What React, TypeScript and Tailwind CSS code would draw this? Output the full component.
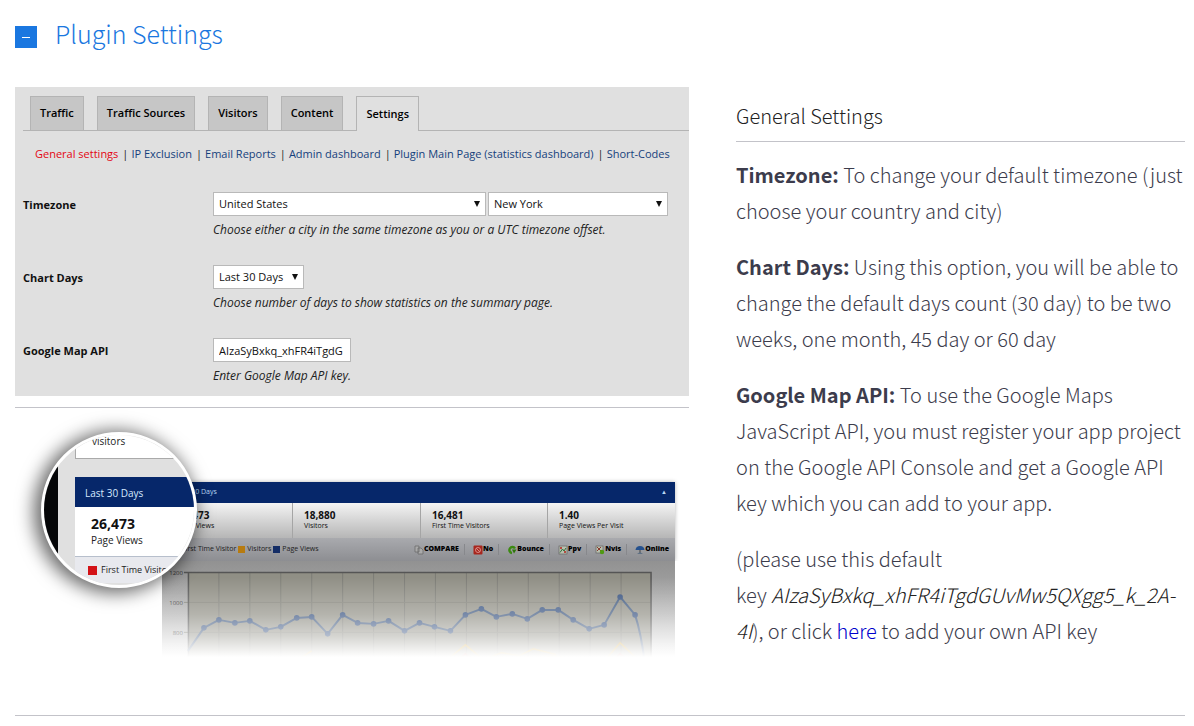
import type { ReactNode } from "react";

const tabs = ["Traffic", "Traffic Sources", "Visitors", "Content", "Settings"];
const links = [
  "General settings",
  "IP Exclusion",
  "Email Reports",
  "Admin dashboard",
  "Plugin Main Page (statistics dashboard)",
  "Short-Codes",
];
const stats = [
  ["26,473", "Page Views"],
  ["18,880", "Visitors"],
  ["16,481", "First Time Visitors"],
  ["1.40", "Page Views Per Visit"],
];

const points = [
  [26, 90], [42, 67], [57, 59], [73, 62], [88, 60], [104, 69], [119, 66], [135, 57], [150, 56],
  [166, 73], [181, 54], [196, 62], [212, 63], [227, 60], [243, 70], [258, 62], [273, 66], [289, 70],
  [304, 54], [320, 48], [335, 56], [351, 53], [366, 58], [381, 49], [397, 49], [412, 59], [428, 68],
  [443, 64], [459, 36], [474, 54],
];

function SelectBox({ id, value, className }: { id: string; value: string; className: string }) {
  return (
    <span className={`relative flex h-6 border border-[#b9b9b9] bg-white ${className}`}>
      <select
        id={id}
        aria-label={id}
        defaultValue={value}
        className="w-full appearance-none bg-transparent pl-[5px] pr-4 text-[11px] text-[#111]"
      >
        <option>{value}</option>
      </select>
      <svg viewBox="0 0 6 6" className="pointer-events-none absolute top-2 right-[5px] size-[6px]">
        <path d="M0 0H6L3 6Z" fill="#111" />
      </svg>
    </span>
  );
}

function Field({ id, label, help, children }: { id: string; label: string; help: string; children: ReactNode }) {
  return (
    <div className="flex h-[73px]">
      <label htmlFor={id} className="w-[190px] pt-[5px] text-[11px] leading-4 font-bold text-[#111]">
        {label}
      </label>
      <div className="flex-1">
        <div className="flex gap-[2px]">{children}</div>
        <p className="mt-[6px] text-[12px] leading-4 whitespace-nowrap text-[#222] italic">{help}</p>
      </div>
    </div>
  );
}

function SettingsPanel() {
  return (
    <section className="h-[309px] bg-[#e0e0e0] pt-[9px] font-['Open_Sans','Noto_Sans',sans-serif] font-normal">
      <div className="ml-2 flex items-end gap-[13px] border-b border-[#b4b4b4] pl-[7px]">
        {tabs.map((tab) => (
          <button
            key={tab}
            className={
              tab === "Settings"
                ? "-mb-px h-[35px] border border-b-0 border-[#b4b4b4] bg-[#e0e0e0] px-[9px] text-[11px] font-semibold text-black"
                : "h-[34px] border border-b-0 border-[#b4b4b4] bg-[#c6c6c6] px-[9px] text-[11px] font-semibold text-black"
            }
          >
            {tab}
          </button>
        ))}
      </div>
      <nav className="mt-[15px] ml-5 flex text-[11px] leading-4 whitespace-nowrap text-[#153f7c]">
        {links.map((link, i) => (
          <span key={link}>
            {i > 0 && <span className="mr-[3px] ml-1 text-[#222]">|</span>}
            <a href="#" className={i === 0 ? "text-[#e30613]" : ""}>
              {link}
            </a>
          </span>
        ))}
      </nav>
      <form className="mt-[30px] ml-2">
        <Field id="Timezone" label="Timezone" help="Choose either a city in the same timezone as you or a UTC timezone offset.">
          <SelectBox id="Timezone" value="United States" className="w-[273px]" />
          <SelectBox id="City" value="New York" className="w-[180px]" />
        </Field>
        <Field id="Chart Days" label="Chart Days" help="Choose number of days to show statistics on the summary page.">
          <SelectBox id="Chart Days" value="Last 30 Days" className="w-[91px]" />
        </Field>
        <Field id="api" label="Google Map API" help="Enter Google Map API key.">
          <input
            id="api"
            defaultValue="AIzaSyBxkq_xhFR4iTgdG"
            className="h-6 w-[138px] border border-[#b9b9b9] bg-white px-[5px] text-[11px] text-[#111]"
          />
        </Field>
      </form>
    </section>
  );
}

function Tool({ label, children }: { label: string; children: ReactNode }) {
  return (
    <button className="flex items-center border-l border-[#87888c] pl-2 text-[7px] font-extrabold text-black first:border-l-0">
      <svg viewBox="0 0 10 10" className="size-[10px]">
        {children}
      </svg>
      {label}
    </button>
  );
}

function Chart() {
  const line = points.map(([x, y]) => `${x} ${y}`).join("L");
  return (
    <svg viewBox="0 0 514 104" className="block w-full overflow-visible">
      <defs>
        <linearGradient id="back" x1="0" y1="0" x2="0" y2="1">
          <stop offset="0" stopColor="#929292" />
          <stop offset="0.3" stopColor="#a2a2a2" />
          <stop offset="1" stopColor="#dddddd" />
        </linearGradient>
        <linearGradient id="fade" x1="0" y1="0" x2="0" y2="1">
          <stop offset="0.15" stopColor="#fff" stopOpacity="0" />
          <stop offset="0.5" stopColor="#fff" stopOpacity="0.33" />
          <stop offset="0.7" stopColor="#fff" stopOpacity="0.62" />
          <stop offset="0.9" stopColor="#fff" stopOpacity="1" />
        </linearGradient>
      </defs>
      <rect width="514" height="104" fill="url(#back)" />
      <rect x="26" y="11" width="464" height="93" fill="#908f85" />
      <g stroke="#7b7b75" fill="none">
        {Array.from({ length: 14 }, (_, i) => (
          <path key={i} d={`M${57 + i * 31} 11V104`} />
        ))}
        <path d="M22 41.500H490M22 71.500H490" stroke="#828278" />
        <path d="M22 11.500H490V104M26.500 11V104" stroke="#555" strokeWidth="1.500" />
      </g>
      <g fontSize="6" fill="#333" textAnchor="end">
        <text x="21" y="14">1200</text>
        <text x="21" y="44">1000</text>
        <text x="21" y="74">800</text>
      </g>
      <path
        d="M370 104L390 95L405 97L420 104M280 104L304 84L322 99L340 92L358 95L372 88L395 94M440 104L459 82L478 100M128 104L150 90"
        fill="none"
        stroke="#c89a2d"
        strokeWidth="1.500"
      />
      <path d="M292 104L304 93L316 104M448 104L459 93L470 104M356 104L366 96L380 104" fill="none" stroke="#b8473e" strokeWidth="1.500" />
      <path d={`M${line}Q480 72 484 104`} fill="none" stroke="#40597f" strokeWidth="2" strokeLinejoin="round" />
      {points.slice(1).map(([x, y]) => (
        <circle key={x} cx={x} cy={y} r="2.800" fill="#35507e" />
      ))}
      <rect x="-1" width="516" height="107" fill="url(#fade)" />
    </svg>
  );
}

function Lens() {
  return (
    <div className="absolute top-6 left-[26px] size-[156px] overflow-hidden rounded-full border-[3px] border-white bg-[#e0e0e0] shadow-[-4px_2px_18px_3px_rgba(0,0,0,0.6)]">
      <div className="flex h-full">
        <div className="w-[14px] bg-[#050608]" />
        <div className="ml-[17px] flex-1 whitespace-nowrap">
          <p className="h-[24px] border-b border-l border-[#aaa] bg-white pl-4 text-[10px] leading-3 text-[#222]">visitors</p>
          <p className="mt-[18px] h-[30px] bg-[#06276a] pl-[10px] text-[10px] leading-8 text-[#d5e9ff]">Last 30 Days</p>
          <div className="h-[50px] border-b border-[#b7bfcc] bg-white pt-2 pl-4">
            <p className="text-[14px] leading-[18px] font-bold text-[#111]">26,473</p>
            <p className="text-[10px] leading-[14px] text-[#222]">Page Views</p>
          </div>
          <p className="flex h-[26px] items-center gap-1 bg-[#e8e9ee] pl-[13px] text-[9px] text-[#222]">
            <span className="size-[9px] bg-[#d31217]" />
            First Time Visitor
          </p>
        </div>
      </div>
    </div>
  );
}

function Dashboard() {
  return (
    <section className="relative pt-[74px] pr-[14px] pl-[147px] font-['Open_Sans','Noto_Sans',sans-serif] font-normal">
      <div className="shadow-[0_0_4px_rgba(0,0,0,0.3)] [clip-path:inset(-6px_-6px_0_-6px)]">
        <div className="flex h-[21px] items-center justify-between bg-[#06276a] pr-2 pl-[14px] text-[7px] text-[#b9d8f5]">
          <span>Last 30 Days</span>
          <span className="text-[6px]">▲</span>
        </div>
        <dl className="grid h-[35px] grid-cols-[130px_128px_127px_1fr] bg-linear-to-b from-[#f4f4f4] to-[#b6b6b6]">
          {stats.map(([n, label]) => (
            <div
              key={label}
              className="flex flex-col-reverse justify-end border-l border-[#a5a5a5] pt-[6px] pl-[11px] whitespace-nowrap first:border-l-0 first:pl-4"
            >
              <dt className="text-[7px] leading-[10px] text-[#111]">{label}</dt>
              <dd className="text-[10px] leading-3 font-bold text-[#111]">{n}</dd>
            </div>
          ))}
        </dl>
        <div className="flex h-[23px] items-center justify-between bg-linear-to-b from-[#a9aaae] to-[#8d8e92] pr-[6px] pl-5">
          <div className="flex items-center gap-[2px] text-[7px] whitespace-nowrap text-[#222]">
            <span>First Time Visitor</span>
            <span className="size-[7px] bg-[#b77b10]" />
            <span>Visitors</span>
            <span className="size-[7px] bg-[#142d66]" />
            <span>Page Views</span>
          </div>
          <div className="flex gap-[5px]">
            <Tool label="COMPARE">
              <path d="M1 1H5V7H1ZM4 3H7L9 5V9H4Z" fill="#aaa" stroke="#666" strokeWidth="0.700" />
            </Tool>
            <Tool label="No">
              <rect x="0.500" y="0.500" width="9" height="9" rx="1" fill="#a8261e" />
              <circle cx="5" cy="5" r="2.500" stroke="#d98a84" fill="none" />
              <path d="M3 3L7 7" stroke="#d98a84" />
            </Tool>
            <Tool label="Bounce">
              <path d="M8 3.500A3 3 0 1 0 5 8" stroke="#3b8a10" strokeWidth="2.400" fill="none" />
              <path d="M5 4.500H9.500L7 8.500Z" fill="#2f760c" />
            </Tool>
            <Tool label="Ppv">
              <rect x="1" y="1" width="8" height="8" fill="#b9c0b0" stroke="#666" strokeWidth="0.700" />
              <path d="M2 7.500L4.500 4L6 6L8 3" stroke="#2f6f3b" fill="none" />
              <circle cx="3" cy="3" r="1" fill="#b3261e" />
              <circle cx="7" cy="7" r="1" fill="#b3261e" />
            </Tool>
            <Tool label="Nvis">
              <rect x="1" y="1" width="7" height="7" fill="#b9c0b0" stroke="#666" strokeWidth="0.700" />
              <path d="M2 2L6 6M6 2L2 6" stroke="#8c3a2e" />
              <circle cx="7" cy="7" r="2.200" fill="#4f9a13" />
            </Tool>
            <Tool label="Online">
              <path d="M0.500 5Q1 1 5 1T9.500 5Z" fill="#25518e" />
              <path d="M5 5V8" stroke="#444" />
              <path d="M2 9L5 7L8 9Z" fill="#5f7184" />
            </Tool>
          </div>
        </div>
      </div>
      <Chart />
      <Lens />
    </section>
  );
}

export default function App() {
  return (
    <main className="bg-white pr-[9px] pl-[15px] font-['Noto_Sans_CJK_SC',sans-serif] font-light">
      <div className="border-b border-[#c3c3c9]">
        <header className="flex h-[87px] items-start gap-[18px] pt-[13px] text-[#1a77e0]">
          <button aria-label="Collapse" className="mt-[13px] flex size-[22px] items-center justify-center bg-[#1a77e0]">
            <span className="h-px w-2 bg-white" />
          </button>
          <h1 className="text-[25px] leading-10">Plugin Settings</h1>
        </header>
        <div className="grid grid-cols-[674fr_449fr] gap-[47px]">
          <div className="min-w-0">
            <SettingsPanel />
            <hr className="mt-[11px] border-[#c3c3c9]" />
            <Dashboard />
          </div>
          <article className="min-w-0 text-[20px] leading-9 text-[#3c3c4c]">
            <h2 className="mb-[15px] border-b border-[#c3c3c9] pt-[11px] pb-[7px] text-[20px] text-[#222]">General Settings</h2>
            <p className="mb-5">
              <b className="font-bold">Timezone:</b> To change your default timezone (just choose your country and city)
            </p>
            <p className="mb-5">
              <b className="font-bold">Chart Days:</b> Using this option, you will be able to change the default days count (30 day) to be two weeks, one
              month, 45 day or 60 day
            </p>
            <p className="mb-5">
              <b className="font-bold">Google Map API:</b> To use the Google Maps JavaScript API, you must register your app project on the Google API
              Console and get a Google API key which you can add to your app.
            </p>
            <p className="pb-[66px]">
              (please use this default key&nbsp;<i className="text-[#222]">AIzaSyBxkq_xhFR4iTgdGUvMw5QXgg5_k_2A-4I</i>), or click{" "}
              <a href="#" className="text-[#0000cc]">
                here
              </a>{" "}
              to add your own API key
            </p>
          </article>
        </div>
      </div>
    </main>
  );
}
